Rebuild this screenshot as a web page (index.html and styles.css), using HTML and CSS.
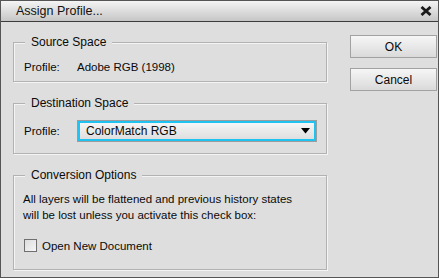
FILE: index.html
```html
<!DOCTYPE html>
<html lang="en">
<head>
    <meta charset="UTF-8">
    <title>Assign Profile...</title>
    <link rel="stylesheet" href="styles.css">
</head>
<body>
    <div class="dialog">
        <div class="titlebar">
            <span class="title">Assign Profile...</span>
            <svg class="close" width="12" height="10" viewBox="0 0 12 10">
                <path d="M1.5 1 L10.5 9 M10.5 1 L1.5 9" stroke="#1a1a1a" stroke-width="2.8"/>
            </svg>
        </div>
        <div class="content">
            <div class="groups">
                <div class="group source">
                    <span class="legend">Source Space</span>
                    <div class="row">
                        <span class="label">Profile:</span>
                        <span>Adobe RGB (1998)</span>
                    </div>
                </div>
                <div class="group destination">
                    <span class="legend">Destination Space</span>
                    <div class="row">
                        <span class="label">Profile:</span>
                        <div class="select">
                            <span>ColorMatch RGB</span>
                            <svg class="arrow" width="9" height="6" viewBox="0 0 9 6">
                                <path d="M0 0 H9 L4.5 5.5 Z" fill="#000"/>
                            </svg>
                        </div>
                    </div>
                </div>
                <div class="group conversion">
                    <span class="legend">Conversion Options</span>
                    <p class="note">All layers will be flattened and previous history states<br>will be lost unless you activate this check box:</p>
                    <label class="check">
                        <span class="box"></span>
                        <span>Open New Document</span>
                    </label>
                </div>
            </div>
            <div class="buttons">
                <div class="button">OK</div>
                <div class="button">Cancel</div>
            </div>
        </div>
    </div>
</body>
</html>
```

FILE: styles.css
```css
:root {
    --bg: #dedede;
    --text: #0a0a0a;
    --etch-dark: #b2b2b2;
    --etch-light: #f4f4f4;
}

* {
    margin: 0;
    padding: 0;
    box-sizing: border-box;
}

body {
    font-family: 'Liberation Sans', Arial, sans-serif;
    font-size: 11.5px;
    color: var(--text);
    background: var(--bg);
}

.dialog {
    width: 439px;
    height: 278px;
    border: 1px solid #555;
    background: var(--bg);
}

.titlebar {
    height: 21px;
    display: flex;
    align-items: center;
    justify-content: space-between;
    padding: 0 6px 0 15px;
    background: linear-gradient(#f4f4f4, #c6c6c6);
    border-bottom: 1px solid #3c3c3c;
}

.title {
    font-size: 12.5px;
    color: #111;
}

.close {
    display: block;
}

.content {
    display: flex;
    padding: 20px 0 0 12px;
}

.groups {
    width: 314px;
    display: flex;
    flex-direction: column;
    gap: 21px;
}

.group {
    position: relative;
    border: 1px solid var(--etch-dark);
    box-shadow: inset 1px 1px 0 var(--etch-light), 1px 1px 0 var(--etch-light);
}

.legend {
    position: absolute;
    top: -8px;
    left: 11px;
    padding: 0 6px;
    background: var(--bg);
    font-size: 12px;
    line-height: 15px;
}

.source {
    height: 40px;
    padding: 16px 0 0 10px;
}

.destination {
    height: 51px;
    padding: 16px 0 0 10px;
}

.conversion {
    height: 95px;
    padding: 15px 0 0 9px;
}

.row {
    display: flex;
    align-items: center;
    line-height: 16px;
}

.label {
    width: 53px;
}

.select {
    width: 240px;
    height: 22px;
    display: flex;
    align-items: center;
    justify-content: space-between;
    padding: 0 6px 0 8px;
    border: 1px solid #9c9c9c;
    box-shadow: inset 0 0 0 2px #1fc3f2;
    background: linear-gradient(#f8f8f8, #dcdcdc);
    font-size: 12px;
}

.arrow {
    display: block;
}

.note {
    line-height: 16px;
}

.check {
    display: flex;
    align-items: center;
    gap: 5px;
    margin-top: 16px;
    margin-left: 1px;
}

.box {
    width: 13px;
    height: 13px;
    border: 1px solid #6f6f6f;
    background: linear-gradient(135deg, #dcdcdc, #f6f6f6);
}

.buttons {
    display: flex;
    flex-direction: column;
    gap: 10px;
    margin-left: 23px;
    margin-top: -7px;
}

.button {
    width: 87px;
    height: 23px;
    display: flex;
    align-items: center;
    justify-content: center;
    border: 1px solid #a2a2a2;
    background: linear-gradient(#f6f6f6, #dadada);
    font-size: 12px;
}
```
